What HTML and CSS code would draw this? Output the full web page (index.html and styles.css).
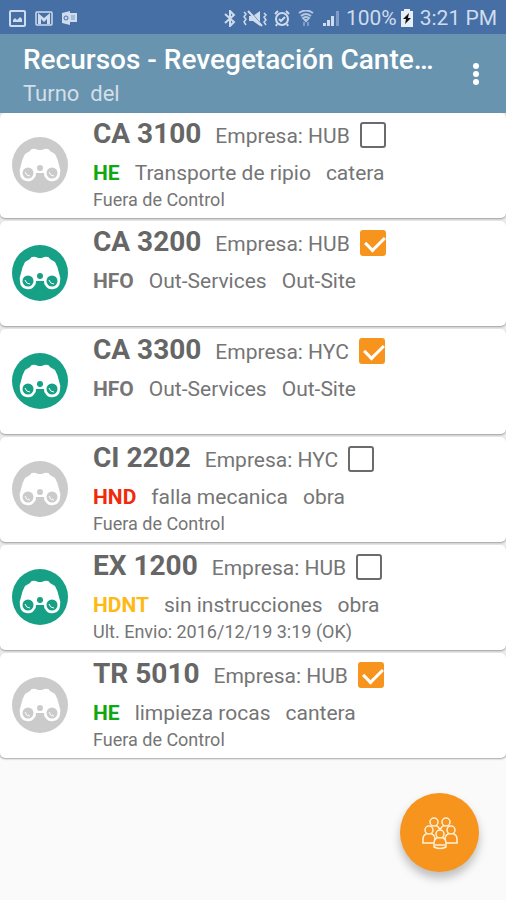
FILE: index.html
```
<!DOCTYPE html>
<html lang="es">
<head>
    <meta charset="UTF-8">
    <meta name="viewport" content="width=device-width, initial-scale=1.0">
    <title>Recursos</title>
    <link rel="stylesheet" href="styles.css">
</head>
<body>
    <svg class="defs" width="0" height="0" aria-hidden="true">
        <symbol id="binoculars" viewBox="0 0 56 56">
            <circle cx="28" cy="28" r="28" fill="currentColor"/>
            <path fill="#fff" d="M18 14q1-3 6-2l2 1h4l2-1q5-1 6 2l5 3q3 5 4 11 2 5 1 9a8 8 0 0 1-15 3q-1-1-1-4h-8q0 3-1 4a8 8 0 0 1-15-3q-1-4 1-9 1-6 4-11z"/>
            <circle cx="28" cy="31" r="3" fill="currentColor"/>
            <circle cx="16" cy="36" r="5.5" fill="currentColor"/>
            <circle cx="40" cy="36" r="5.5" fill="currentColor"/>
            <path d="M13 35q1 4 5 4M37 35q1 4 5 4" fill="none" stroke="#fff" stroke-width="1"/>
        </symbol>
    </svg>

    <div class="statusbar">
        <div class="status-left">
            <svg width="17" height="17" viewBox="0 0 17 17"><rect x="1" y="1" width="15" height="15" rx="1" fill="none" stroke="#cfdcee" stroke-width="2"/><path d="M4 12V10l2-2 2 2 3-3 2 2v3z" fill="#cfdcee"/></svg>
            <svg width="18" height="15" viewBox="0 0 18 15"><rect x="1" y="1" width="16" height="13" rx="1" fill="none" stroke="#cfdcee" stroke-width="1.5"/><path d="M3 13V2l6 5 6-5v11h-3V8l-3 3-3-3v5z" fill="#cfdcee"/></svg>
            <svg width="15" height="14" viewBox="0 0 15 14"><path d="M0 2l8-2v14l-8-2z" fill="#cfdcee"/><path d="M8 3h6v7H8z" fill="#a5bbda" stroke="#cfdcee" stroke-width="2"/><circle cx="4" cy="7" r="2" fill="none" stroke="#456fa5"/></svg>
        </div>
        <div class="status-right">
            <svg width="12" height="17" viewBox="0 0 12 17"><path d="M1 4l9 8-4 4V1l4 4-9 8" fill="none" stroke="#cfdcee" stroke-width="2"/></svg>
            <svg width="26" height="17" viewBox="0 0 26 17"><path d="M7 6h4l7-5v15l-7-5H7z" fill="#cfdcee"/><path d="M8 1l13 15" stroke="#456fa5" stroke-width="1"/><path d="M6 1l14 15" stroke="#cfdcee" stroke-width="2"/><path d="M2 2l2 2-2 3 2 2-2 3 2 3M22 3l2 2-2 2 2 3-2 2 2 3" fill="none" stroke="#cfdcee" stroke-width="1.5"/></svg>
            <svg width="16" height="17" viewBox="0 0 16 17"><circle cx="8" cy="9" r="6" fill="none" stroke="#cfdcee" stroke-width="2"/><path d="M1 4l3-3M12 1l3 3M3 14l-1 2M13 14l1 2M5 9l2 2 4-4" fill="none" stroke="#cfdcee" stroke-width="2"/></svg>
            <svg class="wifi" width="16" height="17" viewBox="0 0 16 17"><path d="M1 3q7-5 14 0M3 6q5-4 10 0M5 8q3-2 6 0L8 11z" fill="none" stroke="#b4c7e0" stroke-width="2"/><path d="M6 12v4M10 12v4" stroke="#7f9cc6" stroke-width="2"/></svg>
            <svg width="18" height="17" viewBox="0 0 18 17"><path d="M1 16v-3h3v3zM5 16v-6h3v6zM9 16V6h3v10z" fill="#cfdcee"/><path d="M14 16V1h3v15z" fill="#7f9cc6"/></svg>
            <span class="percent">100%</span>
            <svg class="battery" width="12" height="18" viewBox="0 0 12 18"><path d="M0 2h3V0h6v2h3v16H0z" fill="#e8eff8"/><path d="M8 4L2 10h3l-1 5 6-6H7z" fill="#111"/></svg>
            <span>3:21 PM</span>
        </div>
    </div>

    <header class="toolbar">
        <div class="titles">
            <h1>Recursos - Revegetación Cante…</h1>
            <p>Turno&nbsp; del</p>
        </div>
        <button class="menu" type="button" aria-label="Más opciones">
            <svg width="8" height="24" viewBox="0 0 8 24" fill="#fff"><circle cx="4" cy="4" r="3"/><circle cx="4" cy="12" r="3"/><circle cx="4" cy="20" r="3"/></svg>
        </button>
    </header>

    <main class="list">
        <div class="card">
            <svg class="avatar off"><use href="#binoculars"/></svg>
            <div class="info">
                <div class="row">
                    <h2>CA 3100</h2>
                    <label for="r1">Empresa: HUB</label>
                    <input type="checkbox" id="r1">
                </div>
                <div class="detail"><b class="green">HE</b><span>Transporte de ripio</span><span>catera</span></div>
                <p class="note">Fuera de Control</p>
            </div>
        </div>
        <div class="card">
            <svg class="avatar"><use href="#binoculars"/></svg>
            <div class="info">
                <div class="row">
                    <h2>CA 3200</h2>
                    <label for="r2">Empresa: HUB</label>
                    <input type="checkbox" id="r2" checked>
                </div>
                <div class="detail"><b>HFO</b><span>Out-Services</span><span>Out-Site</span></div>
            </div>
        </div>
        <div class="card">
            <svg class="avatar"><use href="#binoculars"/></svg>
            <div class="info">
                <div class="row">
                    <h2>CA 3300</h2>
                    <label for="r3">Empresa: HYC</label>
                    <input type="checkbox" id="r3" checked>
                </div>
                <div class="detail"><b>HFO</b><span>Out-Services</span><span>Out-Site</span></div>
            </div>
        </div>
        <div class="card">
            <svg class="avatar off"><use href="#binoculars"/></svg>
            <div class="info">
                <div class="row">
                    <h2>CI 2202</h2>
                    <label for="r4">Empresa: HYC</label>
                    <input type="checkbox" id="r4">
                </div>
                <div class="detail"><b class="red">HND</b><span>falla mecanica</span><span>obra</span></div>
                <p class="note">Fuera de Control</p>
            </div>
        </div>
        <div class="card">
            <svg class="avatar"><use href="#binoculars"/></svg>
            <div class="info">
                <div class="row">
                    <h2>EX 1200</h2>
                    <label for="r5">Empresa: HUB</label>
                    <input type="checkbox" id="r5">
                </div>
                <div class="detail"><b class="yellow">HDNT</b><span>sin instrucciones</span><span>obra</span></div>
                <p class="note">Ult. Envio: 2016/12/19 3:19 (OK)</p>
            </div>
        </div>
        <div class="card">
            <svg class="avatar off"><use href="#binoculars"/></svg>
            <div class="info">
                <div class="row">
                    <h2>TR 5010</h2>
                    <label for="r6">Empresa: HUB</label>
                    <input type="checkbox" id="r6" checked>
                </div>
                <div class="detail"><b class="green">HE</b><span>limpieza rocas</span><span>cantera</span></div>
                <p class="note">Fuera de Control</p>
            </div>
        </div>
    </main>

    <button class="fab" type="button" aria-label="Grupo">
        <svg width="36" height="34" viewBox="0 0 36 34" fill="#f7941d" stroke="#fff0d8" stroke-width="1.5">
            <path d="M7 16q0-6 5-7 6 1 6 7M18 16q0-6 6-7 5 1 5 7"/>
            <circle cx="12" cy="6" r="4"/><circle cx="24" cy="6" r="4"/>
            <path d="M1 27v-4q0-5 6-6 6 1 6 6v4zM23 27v-4q0-5 6-6 6 1 6 6v4z"/>
            <circle cx="7" cy="14" r="4"/><circle cx="29" cy="14" r="4"/>
            <path d="M12 31v-4q0-5 6-6 6 1 6 6v4q-6 3-12 0zM13 29h10"/>
            <circle cx="18" cy="18" r="4"/>
        </svg>
    </button>
</body>
</html>
```
FILE: styles.css
```
* {
    box-sizing: border-box;
}

body {
    font-family: Roboto, sans-serif;
    background-color: #fafafa;
    color: #757575;
    margin: 0;
    min-height: 100vh;
}

h1, h2, p {
    margin: 0;
}

svg {
    flex: none;
}

.defs {
    position: absolute;
}

.statusbar {
    display: flex;
    align-items: center;
    justify-content: space-between;
    height: 34px;
    padding: 2px 9px 0 9px;
    background-color: #456fa5;
    color: #cfdcee;
    font-size: 21px;
}

.status-left, .status-right {
    display: flex;
    align-items: center;
    white-space: nowrap;
}

.status-left {
    gap: 9px;
}

.status-right {
    gap: 6px;
}

.wifi {
    margin: 0 2px;
}

.battery {
    margin: 0 1px 0 -2px;
}

.toolbar {
    display: flex;
    align-items: center;
    justify-content: space-between;
    height: 79px;
    padding: 4px 20px 0 23px;
    background-color: #6994af;
    color: #fff;
}

.titles {
    min-width: 0;
}

.titles h1 {
    font-size: 28px;
    line-height: 36px;
    font-weight: 500;
    white-space: nowrap;
    overflow: hidden;
    text-overflow: ellipsis;
}

.titles p {
    font-size: 22px;
    line-height: 32px;
    color: #d2dfe7;
}

.menu {
    padding: 0 6px 4px;
    border: none;
    background: none;
    line-height: 0;
    cursor: pointer;
}

.list {
    display: flex;
    flex-direction: column;
    gap: 3px;
    background-color: #ececec;
}

.card {
    display: flex;
    gap: 25px;
    min-height: 105px;
    padding: 0 12px;
    background-color: #fff;
    border-radius: 5px;
    box-shadow: 0 1px 2px rgba(0, 0, 0, 0.35);
}

.avatar {
    width: 56px;
    height: 56px;
    margin-top: 24px;
    color: #16a085;
}

.avatar.off {
    color: #cbcbcb;
}

.row {
    display: flex;
    align-items: baseline;
    line-height: 42px;
    height: 42px;
}

.row h2 {
    font-size: 28px;
    font-weight: 700;
    color: #666;
    margin-right: 14px;
}

.row label {
    font-size: 21px;
}

.row input {
    appearance: none;
    align-self: center;
    width: 26px;
    height: 26px;
    margin: 2px 0 0 10px;
    border: 2px solid #6b6b6b;
    border-radius: 3px;
}

.row input:checked {
    border-color: #f7941d;
    background-color: #f7941d;
}

.row input:checked::before {
    content: "";
    display: block;
    width: 9px;
    height: 16px;
    margin: 0 0 0 7px;
    border: solid #fff;
    border-width: 0 3px 3px 0;
    transform: rotate(45deg);
}

.detail {
    display: flex;
    gap: 15px;
    font-size: 21px;
    line-height: 36px;
}

.detail b {
    font-weight: 700;
}

.green {
    color: #0fa80f;
}

.red {
    color: #f02a0a;
}

.yellow {
    color: #ffb914;
}

.note {
    font-size: 18px;
    line-height: 18px;
}

.fab {
    position: fixed;
    right: 27px;
    bottom: 28px;
    width: 79px;
    height: 79px;
    display: flex;
    align-items: center;
    justify-content: center;
    border: none;
    border-radius: 50%;
    background-color: #f7941d;
    box-shadow: 0 6px 10px rgba(0, 0, 0, 0.25);
    cursor: pointer;
}
```
